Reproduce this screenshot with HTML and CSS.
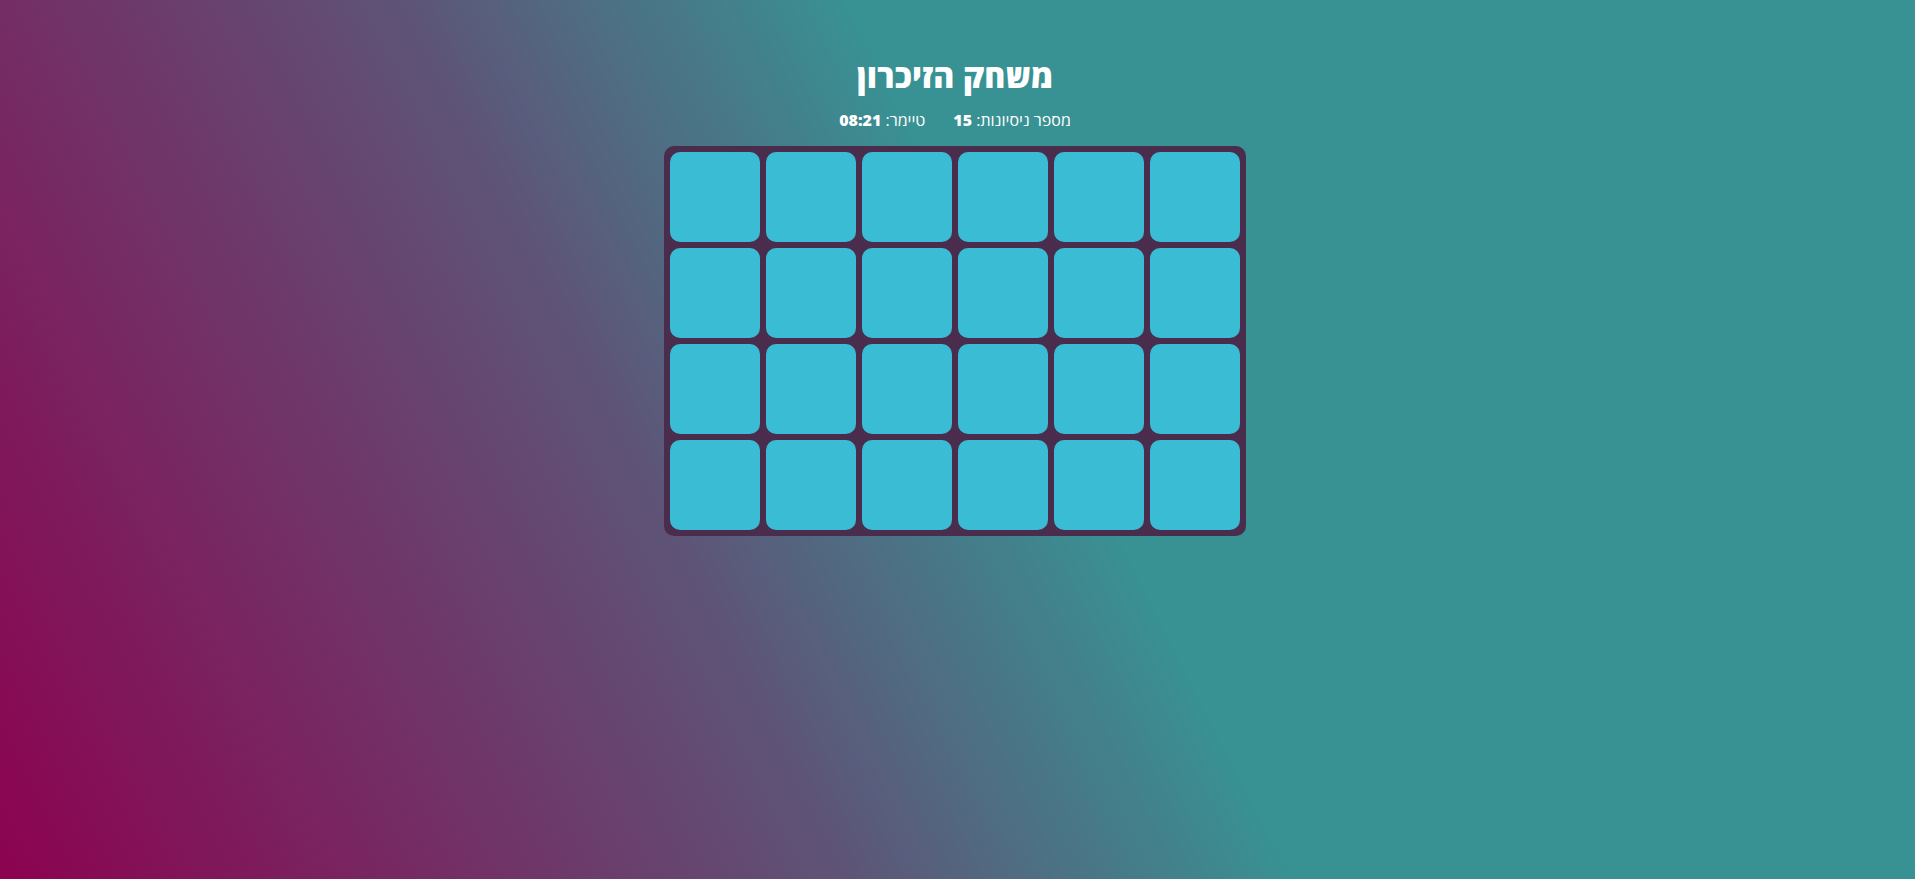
FILE: index.html
```html
<!DOCTYPE html>
<html lang="he" dir="rtl">
<head>
<meta charset="utf-8">
<title>משחק הזיכרון</title>
<link rel="stylesheet" href="styles.css">
</head>
<body>
<main class="game">
  <h1 class="title">משחק הזיכרון</h1>
  <div class="stats">
    <span class="stat">מספר ניסיונות: <b>15</b></span>
    <span class="stat">טיימר: <b>08:21</b></span>
  </div>
  <div class="board">
    <div class="card"></div><div class="card"></div><div class="card"></div><div class="card"></div><div class="card"></div><div class="card"></div>
    <div class="card"></div><div class="card"></div><div class="card"></div><div class="card"></div><div class="card"></div><div class="card"></div>
    <div class="card"></div><div class="card"></div><div class="card"></div><div class="card"></div><div class="card"></div><div class="card"></div>
    <div class="card"></div><div class="card"></div><div class="card"></div><div class="card"></div><div class="card"></div><div class="card"></div>
  </div>
</main>
</body>
</html>
```
FILE: styles.css
```css
html, body {
  margin: 0;
  padding: 0;
}
body {
  min-height: 100vh;
  font-family: "Open Sans", "Liberation Sans", sans-serif;
  color: #ffffff;
  background: linear-gradient(63deg, #8c0250 0%, #5e5478 36%, #389294 55%, #389294 100%);
}
.game {
  display: flex;
  flex-direction: column;
  align-items: center;
  padding-top: 54px;
  padding-right: 5px;
}
.title {
  margin: 0;
  font-size: 32px;
  font-weight: 800;
  line-height: 44px;
}
.stats {
  display: flex;
  gap: 28px;
  margin-top: 11px;
  font-size: 16px;
  line-height: 22px;
}
.stats b {
  font-weight: 800;
}
.board {
  display: grid;
  grid-template-columns: repeat(6, 90px);
  grid-auto-rows: 90px;
  gap: 6px;
  padding: 6px;
  margin-top: 15px;
  background: #4a2d4d;
  border-radius: 10px;
}
.card {
  background: #3bbcd5;
  border-radius: 10px;
}
```
